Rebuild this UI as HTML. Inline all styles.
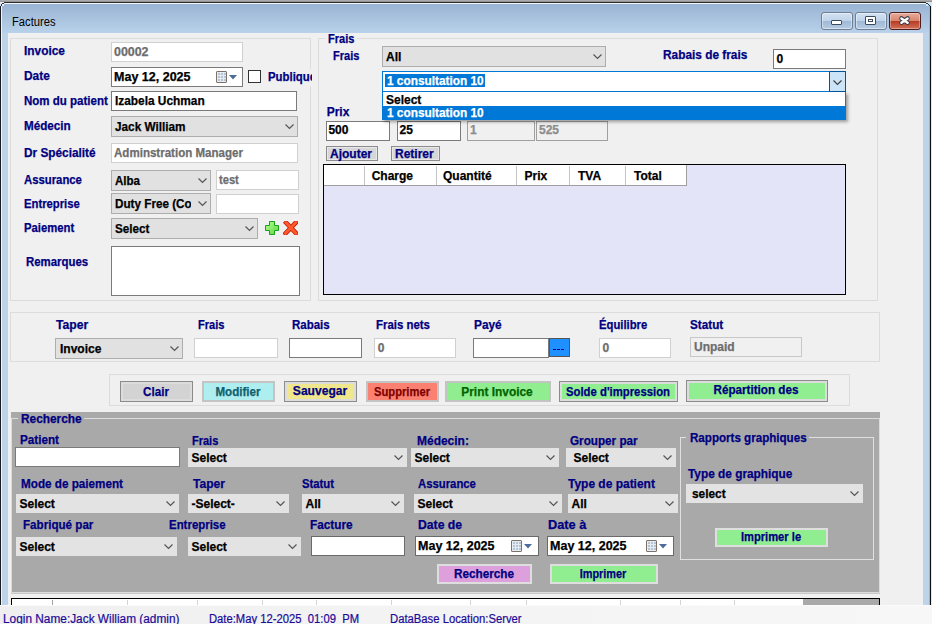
<!DOCTYPE html><html><head><meta charset="utf-8"><style>
html,body{margin:0;padding:0;}
body{width:932px;height:624px;position:relative;overflow:hidden;background:#bcd3ea;font-family:"Liberation Sans",sans-serif;}
.t{position:absolute;white-space:pre;line-height:normal;font-family:"Liberation Sans",sans-serif;}
.t[style*="font-weight:bold"]{-webkit-text-stroke:0.25px currentColor;}
.b{position:absolute;box-sizing:content-box;}
</style></head><body>
<div class="b" style="left:0;top:0;width:932px;height:2px;background:linear-gradient(#b4b4b4,#8a8a8a)"></div>
<div class="b" style="left:0px;top:2px;width:931px;height:622px;background:#bcd3ea;"></div>
<div class="b" style="left:2px;top:4px;width:927px;height:29px;background:linear-gradient(#99b4d3,#b9d1ea)"></div>
<div class="b" style="left:1px;top:2px;width:929px;height:1px;background:#2b2b2b;"></div>
<div class="b" style="left:2px;top:3px;width:927px;height:1px;background:#f4f7fb;"></div>
<div class="b" style="left:0px;top:3px;width:1px;height:602px;background:#1e1e1e;"></div>
<div class="b" style="left:1px;top:3px;width:1px;height:602px;background:#f0f4f8;"></div>
<div class="b" style="left:930px;top:3px;width:1px;height:602px;background:#101010;"></div>
<div class="b" style="left:929px;top:4px;width:1px;height:601px;background:#58cdf5;"></div>
<div class="b" style="left:931px;top:2px;width:1px;height:622px;background:#dde8f3;"></div>
<div class="b" style="left:0px;top:2px;width:4px;height:4px;background:#e4e9f6;"></div>
<div class="b" style="left:4px;top:3px;width:1px;height:1px;background:#f4f7fb;"></div>
<div class="b" style="left:2px;top:3px;width:2px;height:1px;background:#2b2b2b;"></div>
<div class="b" style="left:1px;top:4px;width:1px;height:2px;background:#2b2b2b;"></div>
<div class="b" style="left:0px;top:6px;width:1px;height:1px;background:#1e1e1e;"></div>
<div class="b" style="left:2px;top:4px;width:2px;height:1px;background:#f4f7fb;"></div>
<div class="b" style="left:2px;top:5px;width:1px;height:1px;background:#dfe8f2;"></div>
<div class="b" style="left:926px;top:2px;width:6px;height:4px;background:#dce4f2;"></div>
<div class="b" style="left:926px;top:3px;width:2px;height:1px;background:#1a3a40;"></div>
<div class="b" style="left:928px;top:4px;width:1px;height:1px;background:#1a3a40;"></div>
<div class="b" style="left:929px;top:5px;width:1px;height:1px;background:#1a3a40;"></div>
<div class="b" style="left:926px;top:4px;width:2px;height:1px;background:#c8f0fa;"></div>
<div class="b" style="left:928px;top:5px;width:1px;height:1px;background:#9ae4f8;"></div>
<div class="t" style="left:12.2px;top:15.14px;font-size:12px;color:#000;font-weight:normal;transform:scaleX(0.9339);transform-origin:0 0;">Factures</div>
<div class="b" style="left:821px;top:12px;width:30px;height:16px;border:1px solid #6e7f94;border-radius:3px;background:linear-gradient(#d3e2f2 0%,#bfd3e9 48%,#9fb9d6 52%,#b6cce4 100%);box-shadow:inset 0 0 0 1px rgba(255,255,255,.45)"></div>
<div class="b" style="left:831px;top:20px;width:9px;height:3px;border:1px solid #3c4a5c;border-radius:1px;background:#fff"></div>
<div class="b" style="left:855px;top:12px;width:30px;height:16px;border:1px solid #6e7f94;border-radius:3px;background:linear-gradient(#d3e2f2 0%,#bfd3e9 48%,#9fb9d6 52%,#b6cce4 100%);box-shadow:inset 0 0 0 1px rgba(255,255,255,.45)"></div>
<div class="b" style="left:865px;top:16px;width:9px;height:7px;border:1px solid #3c4a5c;border-radius:1px;background:#fff;box-shadow:inset 0 0 0 2px #fff, inset 0 0 0 3px #3c4a5c"></div>
<div class="b" style="left:889px;top:12px;width:30px;height:16px;border:1px solid #4e1d1d;border-radius:3px;background:linear-gradient(#e8ab9c 0%,#d98670 48%,#b83c22 52%,#d0705a 100%);box-shadow:inset 0 0 0 1px rgba(255,255,255,.35)"></div>
<svg class="b" style="left:897px;top:14px" width="15" height="13" viewBox="0 0 15 13"><path d="M4.4 4.4 L10.6 8.8 M10.6 4.4 L4.4 8.8" stroke="#3a3a4a" stroke-width="4.4" stroke-linecap="round"/><path d="M4.4 4.4 L10.6 8.8 M10.6 4.4 L4.4 8.8" stroke="#fff" stroke-width="2.4" stroke-linecap="round"/></svg>

<div class="b" style="left:8px;top:33px;width:915px;height:572px;background:#f0f0f0;"></div>
<div class="b" style="left:10px;top:38px;width:299px;height:261px;border:1px solid #dcdcdc;"></div>
<div class="t" style="left:24px;top:44.14px;font-size:12px;color:#000080;font-weight:bold;transform:scaleX(0.9889);transform-origin:0 0;">Invoice</div>
<div class="b" style="left:111px;top:42px;width:130px;height:18px;background:#fff;border:1px solid #d0d0d0;"></div>
<div class="t" style="left:114px;top:45.14px;font-size:12px;color:#6d6d6d;font-weight:bold;transform:scaleX(1.0337);transform-origin:0 0;">00002</div>
<div class="t" style="left:24px;top:69.14px;font-size:12px;color:#000080;font-weight:bold;transform:scaleX(0.9917);transform-origin:0 0;">Date</div>
<div class="b" style="left:111px;top:67px;width:130px;height:18px;background:#fff;border:1px solid #7a7a7a;"></div>
<div class="t" style="left:114px;top:70.14px;font-size:12px;color:#000;font-weight:bold;transform:scaleX(1.0424);transform-origin:0 0;">May 12, 2025</div>
<div class="b" style="left:216px;top:71px;width:9px;height:10px;border:1px solid #7d716a;border-radius:1px;background:#e4ecf4"></div>
<div class="b" style="left:218px;top:73px;width:2px;height:2px;background:#b7c3d2;"></div>
<div class="b" style="left:218px;top:76px;width:2px;height:2px;background:#b7c3d2;"></div>
<div class="b" style="left:218px;top:79px;width:2px;height:2px;background:#b7c3d2;"></div>
<div class="b" style="left:221px;top:73px;width:2px;height:2px;background:#b7c3d2;"></div>
<div class="b" style="left:221px;top:76px;width:2px;height:2px;background:#b7c3d2;"></div>
<div class="b" style="left:221px;top:79px;width:2px;height:2px;background:#b7c3d2;"></div>
<div class="b" style="left:224px;top:73px;width:2px;height:2px;background:#b7c3d2;"></div>
<div class="b" style="left:224px;top:76px;width:2px;height:2px;background:#b7c3d2;"></div>
<div class="b" style="left:224px;top:79px;width:2px;height:2px;background:#b7c3d2;"></div>
<svg class="b" style="left:229px;top:75px" width="8" height="5" viewBox="0 0 8 5"><path d="M0 0 L8 0 L4 4.5 Z" fill="#4d6c9a"/></svg>
<div class="b" style="left:248px;top:70px;width:11px;height:11px;background:#fff;border:1px solid #333;"></div>
<div class="b" style="left:266px;top:69px;width:46px;height:17px;overflow:hidden;background:#f0f0f0">
<div class="t" style="left:1.8px;top:1.14px;font-size:12px;color:#000080;font-weight:bold;transform:scaleX(0.9473);transform-origin:0 0;">Publique</div>
</div>
<div class="t" style="left:24px;top:94.14px;font-size:12px;color:#000080;font-weight:bold;transform:scaleX(0.9596);transform-origin:0 0;">Nom du patient</div>
<div class="b" style="left:111px;top:91px;width:184px;height:18px;background:#fff;border:1px solid #7a7a7a;"></div>
<div class="t" style="left:115px;top:94.14px;font-size:12px;color:#000;font-weight:bold;transform:scaleX(0.9889);transform-origin:0 0;">Izabela Uchman</div>
<div class="t" style="left:24px;top:119.14px;font-size:12px;color:#000080;font-weight:bold;transform:scaleX(0.9726);transform-origin:0 0;">Médecin</div>
<div class="b" style="left:111px;top:116px;width:185px;height:19px;background:#e1e1e1;border:1px solid #adadad;"></div>
<div class="t" style="left:115px;top:120.14px;font-size:12px;color:#000;font-weight:bold;transform:scaleX(0.9814);transform-origin:0 0;">Jack William</div>
<svg class="b" style="left:284px;top:123px" width="11" height="8" viewBox="0 0 11 8"><path d="M1.5 1.5 L5.5 5.5 L9.5 1.5" fill="none" stroke="#555" stroke-width="1.2"/></svg>
<div class="t" style="left:24px;top:146.14px;font-size:12px;color:#000080;font-weight:bold;transform:scaleX(0.9848);transform-origin:0 0;">Dr Spécialité</div>
<div class="b" style="left:111px;top:143px;width:185px;height:18px;background:#fff;border:1px solid #d0d0d0;"></div>
<div class="t" style="left:114px;top:146.14px;font-size:12px;color:#6d6d6d;font-weight:bold;transform:scaleX(0.9626);transform-origin:0 0;">Adminstration Manager</div>
<div class="t" style="left:24px;top:173.14px;font-size:12px;color:#000080;font-weight:bold;transform:scaleX(0.9434);transform-origin:0 0;">Assurance</div>
<div class="b" style="left:111px;top:170px;width:98px;height:19px;background:#e1e1e1;border:1px solid #adadad;"></div>
<div class="t" style="left:115px;top:174.14px;font-size:12px;color:#000;font-weight:bold;transform:scaleX(0.9610);transform-origin:0 0;">Alba</div>
<svg class="b" style="left:197px;top:177px" width="11" height="8" viewBox="0 0 11 8"><path d="M1.5 1.5 L5.5 5.5 L9.5 1.5" fill="none" stroke="#555" stroke-width="1.2"/></svg>
<div class="b" style="left:216px;top:170px;width:81px;height:18px;background:#fff;border:1px solid #d0d0d0;"></div>
<div class="t" style="left:218.5px;top:173.14px;font-size:12px;color:#6d6d6d;font-weight:bold;transform:scaleX(0.9277);transform-origin:0 0;">test</div>
<div class="t" style="left:24px;top:197.14px;font-size:12px;color:#000080;font-weight:bold;transform:scaleX(0.9400);transform-origin:0 0;">Entreprise</div>
<div class="b" style="left:111px;top:193px;width:98px;height:19px;background:#e1e1e1;border:1px solid #adadad;"></div>
<svg class="b" style="left:197px;top:200px" width="11" height="8" viewBox="0 0 11 8"><path d="M1.5 1.5 L5.5 5.5 L9.5 1.5" fill="none" stroke="#555" stroke-width="1.2"/></svg>
<div class="b" style="left:112px;top:194px;width:79px;height:19px;overflow:hidden">
<div class="t" style="left:3.4px;top:3.14px;font-size:12px;color:#000;font-weight:bold;transform:scaleX(0.9750);transform-origin:0 0;">Duty Free (Company)</div>
</div>
<div class="b" style="left:216px;top:194px;width:81px;height:18px;background:#fff;border:1px solid #d0d0d0;"></div>
<div class="t" style="left:24px;top:221.14px;font-size:12px;color:#000080;font-weight:bold;transform:scaleX(0.9408);transform-origin:0 0;">Paiement</div>
<div class="b" style="left:111px;top:218px;width:145px;height:19px;background:#e1e1e1;border:1px solid #adadad;"></div>
<div class="t" style="left:115px;top:222.14px;font-size:12px;color:#000;font-weight:bold;transform:scaleX(0.9729);transform-origin:0 0;">Select</div>
<svg class="b" style="left:244px;top:225px" width="11" height="8" viewBox="0 0 11 8"><path d="M1.5 1.5 L5.5 5.5 L9.5 1.5" fill="none" stroke="#555" stroke-width="1.2"/></svg>
<svg class="b" style="left:265px;top:221px" width="14" height="14" viewBox="0 0 14 14"><defs><linearGradient id="gp" x1="0" y1="0" x2="1" y2="1"><stop offset="0" stop-color="#b4ff96"/><stop offset="1" stop-color="#5ad838"/></linearGradient></defs><path d="M4.5 0.5 H9.5 V4.5 H13.5 V9.5 H9.5 V13.5 H4.5 V9.5 H0.5 V4.5 H4.5 Z" fill="url(#gp)" stroke="#1c9e1c" stroke-width="1"/></svg>
<svg class="b" style="left:283px;top:221px" width="15" height="14" viewBox="0 0 15 14"><path d="M3.2 1.8 L13 12.2 M12.8 1.6 L2.6 12.3" stroke="#c81e06" stroke-width="4.6" stroke-linecap="square"/><path d="M3.2 1.8 L13 12.2 M12.8 1.6 L2.6 12.3" stroke="#ff5a2c" stroke-width="2.8" stroke-linecap="square"/></svg>
<div class="t" style="left:25.5px;top:255.14px;font-size:12px;color:#000080;font-weight:bold;transform:scaleX(0.9514);transform-origin:0 0;">Remarques</div>
<div class="b" style="left:111px;top:246px;width:187px;height:48px;background:#fff;border:1px solid #7a7a7a;"></div>
<div class="b" style="left:318px;top:38px;width:558px;height:261px;border:1px solid #dcdcdc;"></div>
<div class="b" style="left:325px;top:33px;width:32px;height:12px;background:#f0f0f0;"></div>
<div class="t" style="left:327.6px;top:32.14px;font-size:12px;color:#000080;font-weight:bold;transform:scaleX(0.9203);transform-origin:0 0;">Frais</div>
<div class="t" style="left:332.7px;top:49.14px;font-size:12px;color:#000080;font-weight:bold;transform:scaleX(0.9203);transform-origin:0 0;">Frais</div>
<div class="b" style="left:382px;top:46px;width:222px;height:19px;background:#e1e1e1;border:1px solid #adadad;"></div>
<div class="t" style="left:386px;top:50.14px;font-size:12px;color:#000;font-weight:bold;">All</div>
<svg class="b" style="left:592px;top:53px" width="11" height="8" viewBox="0 0 11 8"><path d="M1.5 1.5 L5.5 5.5 L9.5 1.5" fill="none" stroke="#555" stroke-width="1.2"/></svg>
<div class="t" style="left:662.7px;top:48.14px;font-size:12px;color:#000080;font-weight:bold;transform:scaleX(0.9874);transform-origin:0 0;">Rabais de frais</div>
<div class="b" style="left:773px;top:49px;width:71px;height:18px;background:#fff;border:1px solid #7a7a7a;"></div>
<div class="t" style="left:776.6px;top:52.14px;font-size:12px;color:#000;font-weight:bold;">0</div>
<div class="t" style="left:326.7px;top:105.14px;font-size:12px;color:#000080;font-weight:bold;">Prix</div>
<div class="b" style="left:326px;top:121px;width:62px;height:18px;background:#fff;border:1px solid #7a7a7a;"></div>
<div class="t" style="left:328.4px;top:123.14px;font-size:12px;color:#000;font-weight:bold;">500</div>
<div class="b" style="left:397px;top:121px;width:62px;height:18px;background:#fff;border:1px solid #7a7a7a;"></div>
<div class="t" style="left:399.5px;top:123.14px;font-size:12px;color:#000;font-weight:bold;">25</div>
<div class="b" style="left:467px;top:121px;width:66px;height:18px;background:#f0f0f0;border:1px solid #a0a0a0;"></div>
<div class="t" style="left:470px;top:123.14px;font-size:12px;color:#8c8c8c;font-weight:bold;">1</div>
<div class="b" style="left:536px;top:121px;width:70px;height:18px;background:#f0f0f0;border:1px solid #a0a0a0;"></div>
<div class="t" style="left:539px;top:123.14px;font-size:12px;color:#8c8c8c;font-weight:bold;">525</div>
<div class="b" style="left:326px;top:146px;width:50px;height:13px;border:1px solid #8c8c8c;background:#d7d7d7;box-shadow:inset 0 0 0 1px #e8e8e8"></div>
<div class="t" style="left:330px;top:147.14px;font-size:12px;color:#000080;font-weight:bold;">Ajouter</div>
<div class="b" style="left:391px;top:146px;width:47px;height:13px;border:1px solid #8c8c8c;background:#d7d7d7;box-shadow:inset 0 0 0 1px #e8e8e8"></div>
<div class="t" style="left:395px;top:147.14px;font-size:12px;color:#000080;font-weight:bold;">Retirer</div>
<div class="b" style="left:323px;top:164px;width:521px;height:129px;border:1px solid #000;background:#e4e4f8"></div>
<div class="b" style="left:324px;top:165px;width:363px;height:21px;background:#fff;"></div>
<div class="b" style="left:324px;top:185px;width:363px;height:1px;background:#a0a0a0;"></div>
<div class="b" style="left:364px;top:166px;width:1px;height:19px;background:#c4c4c4;"></div>
<div class="b" style="left:436px;top:166px;width:1px;height:19px;background:#c4c4c4;"></div>
<div class="b" style="left:516px;top:166px;width:1px;height:19px;background:#c4c4c4;"></div>
<div class="b" style="left:569px;top:166px;width:1px;height:19px;background:#c4c4c4;"></div>
<div class="b" style="left:625px;top:166px;width:1px;height:19px;background:#c4c4c4;"></div>
<div class="b" style="left:686px;top:165px;width:1px;height:21px;background:#a0a0a0;"></div>
<div class="t" style="left:371.7px;top:169.14px;font-size:12px;color:#000;font-weight:bold;">Charge</div>
<div class="t" style="left:443px;top:169.14px;font-size:12px;color:#000;font-weight:bold;">Quantité</div>
<div class="t" style="left:524.5px;top:169.14px;font-size:12px;color:#000;font-weight:bold;">Prix</div>
<div class="t" style="left:578px;top:169.14px;font-size:12px;color:#000;font-weight:bold;">TVA</div>
<div class="t" style="left:634px;top:169.14px;font-size:12px;color:#000;font-weight:bold;">Total</div>
<div class="b" style="left:382px;top:71px;width:462px;height:19px;border:1px solid #0078d7;background:#fff"></div>
<div class="b" style="left:382px;top:91px;width:464px;height:1px;background:#0078d7;"></div>
<div class="b" style="left:829px;top:71px;width:15px;height:19px;border:1px solid #00549a;background:#cce4f7"></div>
<svg class="b" style="left:832px;top:79px" width="11" height="8" viewBox="0 0 11 8"><path d="M1.5 1.5 L5.5 5.5 L9.5 1.5" fill="none" stroke="#404040" stroke-width="1.2"/></svg>
<div class="b" style="left:385px;top:74px;width:100px;height:13px;background:#0078d7;"></div>
<div class="t" style="left:386.6px;top:74.14px;font-size:12px;color:#fff;font-weight:bold;transform:scaleX(0.9854);transform-origin:0 0;">1 consultation 10</div>
<div class="b" style="left:382px;top:92px;width:462px;height:27px;border:1px solid #0078d7;border-top:none;background:#fff;box-shadow:2px 2px 3px rgba(0,0,0,.35)"></div>
<div class="b" style="left:383px;top:106px;width:462px;height:14px;background:#0078d7;"></div>
<div class="t" style="left:386px;top:92.64px;font-size:12px;color:#000;font-weight:bold;">Select</div>
<div class="t" style="left:386.6px;top:106.14px;font-size:12px;color:#fff;font-weight:bold;transform:scaleX(0.9854);transform-origin:0 0;">1 consultation 10</div>
<div class="b" style="left:10px;top:312px;width:868px;height:48px;border:1px solid #dcdcdc;"></div>
<div class="t" style="left:56.1px;top:318.14px;font-size:12px;color:#000080;font-weight:bold;transform:scaleX(1.0127);transform-origin:0 0;">Taper</div>
<div class="b" style="left:55px;top:338px;width:126px;height:19px;background:#e1e1e1;border:1px solid #adadad;"></div>
<div class="t" style="left:60px;top:342.14px;font-size:12px;color:#000;font-weight:bold;">Invoice</div>
<svg class="b" style="left:169px;top:345px" width="11" height="8" viewBox="0 0 11 8"><path d="M1.5 1.5 L5.5 5.5 L9.5 1.5" fill="none" stroke="#555" stroke-width="1.2"/></svg>
<div class="t" style="left:197.7px;top:318.14px;font-size:12px;color:#000080;font-weight:bold;transform:scaleX(0.9203);transform-origin:0 0;">Frais</div>
<div class="b" style="left:194px;top:338px;width:82px;height:18px;background:#fff;border:1px solid #d0d0d0;"></div>
<div class="t" style="left:292px;top:318.14px;font-size:12px;color:#000080;font-weight:bold;transform:scaleX(0.9578);transform-origin:0 0;">Rabais</div>
<div class="b" style="left:289px;top:338px;width:71px;height:18px;background:#fff;border:1px solid #7a7a7a;"></div>
<div class="t" style="left:375.7px;top:318.14px;font-size:12px;color:#000080;font-weight:bold;transform:scaleX(0.9506);transform-origin:0 0;">Frais nets</div>
<div class="b" style="left:374px;top:338px;width:80px;height:18px;background:#fff;border:1px solid #d0d0d0;"></div>
<div class="t" style="left:377.8px;top:341.14px;font-size:12px;color:#6d6d6d;font-weight:bold;">0</div>
<div class="t" style="left:473.5px;top:318.14px;font-size:12px;color:#000080;font-weight:bold;transform:scaleX(0.9882);transform-origin:0 0;">Payé</div>
<div class="b" style="left:473px;top:338px;width:74px;height:18px;background:#fff;border:1px solid #7a7a7a;"></div>
<div class="b" style="left:549px;top:338px;width:21px;height:19px;background:#1e90ff;box-shadow:inset 0 0 0 1px #555;"></div>
<div class="b" style="left:553px;top:349px;width:3px;height:1px;background:#000080;"></div>
<div class="b" style="left:557px;top:349px;width:3px;height:1px;background:#000080;"></div>
<div class="b" style="left:561px;top:349px;width:3px;height:1px;background:#000080;"></div>
<div class="t" style="left:599.4px;top:318.14px;font-size:12px;color:#000080;font-weight:bold;transform:scaleX(0.9388);transform-origin:0 0;">Équilibre</div>
<div class="b" style="left:599px;top:338px;width:70px;height:18px;background:#fff;border:1px solid #d0d0d0;"></div>
<div class="t" style="left:602.5px;top:341.14px;font-size:12px;color:#6d6d6d;font-weight:bold;">0</div>
<div class="t" style="left:690.1px;top:318.14px;font-size:12px;color:#000080;font-weight:bold;transform:scaleX(0.9765);transform-origin:0 0;">Statut</div>
<div class="b" style="left:690px;top:337px;width:110px;height:18px;background:#f0f0f0;border:1px solid #c8c8c8;"></div>
<div class="t" style="left:694px;top:340.14px;font-size:12px;color:#6d6d6d;font-weight:bold;">Unpaid</div>
<div class="b" style="left:109px;top:374px;width:739px;height:30px;border:1px solid #dcdcdc;"></div>
<div class="b" style="left:120px;top:381px;width:71px;height:19px;border:1px solid #8c8c8c;background:#d3d3d3;box-shadow:inset 0 0 0 2px #dcdcdc"></div>
<div class="t" style="left:155.7px;top:385.14px;color:#000080;font-size:12px;font-weight:bold;transform:translateX(-50%) scaleX(0.9667);transform-origin:50% 0">Clair</div>
<div class="b" style="left:202px;top:381px;width:69px;height:17px;border:2px solid #c4c4c4;background:#afeeee;"></div>
<div class="t" style="left:237.7px;top:385.14px;color:#106070;font-size:12px;font-weight:bold;transform:translateX(-50%) scaleX(0.9663);transform-origin:50% 0">Modifier</div>
<div class="b" style="left:284px;top:381px;width:71px;height:19px;border:1px solid #8c8c8c;background:#f0e68c;box-shadow:inset 0 0 0 2px #dcdcdc"></div>
<div class="t" style="left:319.7px;top:384.14px;color:#000080;font-size:12px;font-weight:bold;transform:translateX(-50%) scaleX(1.0050);transform-origin:50% 0">Sauvegar</div>
<div class="b" style="left:366px;top:381px;width:69px;height:17px;border:2px solid #c4c4c4;background:#fa8072;"></div>
<div class="t" style="left:401.7px;top:385.14px;color:#800000;font-size:12px;font-weight:bold;transform:translateX(-50%) scaleX(0.9331);transform-origin:50% 0">Supprimer</div>
<div class="b" style="left:445px;top:381px;width:102px;height:17px;border:2px solid #c4c4c4;background:#90ee90;"></div>
<div class="t" style="left:497.2px;top:385.14px;color:#006400;font-size:12px;font-weight:bold;transform:translateX(-50%) scaleX(0.9912);transform-origin:50% 0">Print Invoice</div>
<div class="b" style="left:559px;top:381px;width:117px;height:19px;border:1px solid #8c8c8c;background:#90ee90;box-shadow:inset 0 0 0 2px #dcdcdc"></div>
<div class="t" style="left:617.7px;top:385.14px;color:#000080;font-size:12px;font-weight:bold;transform:translateX(-50%) scaleX(0.9436);transform-origin:50% 0">Solde d'impression</div>
<div class="b" style="left:686px;top:380px;width:140px;height:20px;border:1px solid #8c8c8c;background:#90ee90;box-shadow:inset 0 0 0 2px #dcdcdc"></div>
<div class="t" style="left:756.2px;top:383.14px;color:#000080;font-size:12px;font-weight:bold;transform:translateX(-50%) scaleX(0.9730);transform-origin:50% 0">Répartition des</div>
<div class="b" style="left:11px;top:412px;width:869px;height:180px;background:#a9a9a9;"></div>
<div class="b" style="left:11px;top:592px;width:869px;height:1px;background:#dcdcdc;"></div>
<div class="b" style="left:11px;top:593px;width:869px;height:1px;background:#c8c8c8;"></div>
<div class="b" style="left:11px;top:418px;width:869px;height:1px;background:#dcdcdc;"></div>
<div class="b" style="left:11px;top:418px;width:1px;height:175px;background:#dcdcdc;"></div>
<div class="b" style="left:879px;top:418px;width:1px;height:175px;background:#dcdcdc;"></div>
<div class="b" style="left:18px;top:413px;width:66px;height:10px;background:#a9a9a9;"></div>
<div class="t" style="left:20.8px;top:412.14px;font-size:12px;color:#000080;font-weight:bold;transform:scaleX(0.9890);transform-origin:0 0;">Recherche</div>
<div class="t" style="left:20.2px;top:433.14px;font-size:12px;color:#000080;font-weight:bold;transform:scaleX(0.9746);transform-origin:0 0;">Patient</div>
<div class="b" style="left:15px;top:447px;width:163px;height:18px;background:#fff;border:1px solid #7a7a7a;"></div>
<div class="t" style="left:192.4px;top:434.14px;font-size:12px;color:#000080;font-weight:bold;transform:scaleX(0.9168);transform-origin:0 0;">Frais</div>
<div class="b" style="left:188px;top:448px;width:217px;height:17px;background:#e3e3e3;border:1px solid #e3e3e3;"></div>
<div class="t" style="left:191.5px;top:451.14px;font-size:12px;color:#000;font-weight:bold;">Select</div>
<svg class="b" style="left:393px;top:454px" width="11" height="8" viewBox="0 0 11 8"><path d="M1.5 1.5 L5.5 5.5 L9.5 1.5" fill="none" stroke="#555" stroke-width="1.2"/></svg>
<div class="t" style="left:416.7px;top:434.14px;font-size:12px;color:#000080;font-weight:bold;transform:scaleX(0.9978);transform-origin:0 0;">Médecin:</div>
<div class="b" style="left:411px;top:448px;width:146px;height:17px;background:#e3e3e3;border:1px solid #e3e3e3;"></div>
<div class="t" style="left:414.5px;top:451.14px;font-size:12px;color:#000;font-weight:bold;">Select</div>
<svg class="b" style="left:545px;top:454px" width="11" height="8" viewBox="0 0 11 8"><path d="M1.5 1.5 L5.5 5.5 L9.5 1.5" fill="none" stroke="#555" stroke-width="1.2"/></svg>
<div class="t" style="left:569.9px;top:434.14px;font-size:12px;color:#000080;font-weight:bold;transform:scaleX(0.9746);transform-origin:0 0;">Grouper par</div>
<div class="b" style="left:566px;top:448px;width:108px;height:17px;background:#e3e3e3;border:1px solid #e3e3e3;"></div>
<div class="t" style="left:573.5px;top:451.14px;font-size:12px;color:#000;font-weight:bold;">Select</div>
<svg class="b" style="left:662px;top:454px" width="11" height="8" viewBox="0 0 11 8"><path d="M1.5 1.5 L5.5 5.5 L9.5 1.5" fill="none" stroke="#555" stroke-width="1.2"/></svg>
<div class="t" style="left:21px;top:477.14px;font-size:12px;color:#000080;font-weight:bold;transform:scaleX(0.9743);transform-origin:0 0;">Mode de paiement</div>
<div class="b" style="left:16px;top:494px;width:161px;height:17px;background:#e3e3e3;border:1px solid #e3e3e3;"></div>
<div class="t" style="left:19.5px;top:497.14px;font-size:12px;color:#000;font-weight:bold;">Select</div>
<svg class="b" style="left:165px;top:500px" width="11" height="8" viewBox="0 0 11 8"><path d="M1.5 1.5 L5.5 5.5 L9.5 1.5" fill="none" stroke="#555" stroke-width="1.2"/></svg>
<div class="t" style="left:193.1px;top:477.14px;font-size:12px;color:#000080;font-weight:bold;transform:scaleX(1.0064);transform-origin:0 0;">Taper</div>
<div class="b" style="left:188px;top:494px;width:99px;height:17px;background:#e3e3e3;border:1px solid #e3e3e3;"></div>
<div class="t" style="left:191.5px;top:497.14px;font-size:12px;color:#000;font-weight:bold;">-Select-</div>
<svg class="b" style="left:275px;top:500px" width="11" height="8" viewBox="0 0 11 8"><path d="M1.5 1.5 L5.5 5.5 L9.5 1.5" fill="none" stroke="#555" stroke-width="1.2"/></svg>
<div class="t" style="left:301.9px;top:477.14px;font-size:12px;color:#000080;font-weight:bold;transform:scaleX(0.9412);transform-origin:0 0;">Statut</div>
<div class="b" style="left:302px;top:494px;width:100px;height:17px;background:#e3e3e3;border:1px solid #e3e3e3;"></div>
<div class="t" style="left:305.5px;top:497.14px;font-size:12px;color:#000;font-weight:bold;">All</div>
<svg class="b" style="left:390px;top:500px" width="11" height="8" viewBox="0 0 11 8"><path d="M1.5 1.5 L5.5 5.5 L9.5 1.5" fill="none" stroke="#555" stroke-width="1.2"/></svg>
<div class="t" style="left:417.7px;top:477.14px;font-size:12px;color:#000080;font-weight:bold;transform:scaleX(0.9434);transform-origin:0 0;">Assurance</div>
<div class="b" style="left:414px;top:494px;width:146px;height:17px;background:#e3e3e3;border:1px solid #e3e3e3;"></div>
<div class="t" style="left:417.5px;top:497.14px;font-size:12px;color:#000;font-weight:bold;">Select</div>
<svg class="b" style="left:548px;top:500px" width="11" height="8" viewBox="0 0 11 8"><path d="M1.5 1.5 L5.5 5.5 L9.5 1.5" fill="none" stroke="#555" stroke-width="1.2"/></svg>
<div class="t" style="left:568.3px;top:477.14px;font-size:12px;color:#000080;font-weight:bold;transform:scaleX(0.9974);transform-origin:0 0;">Type de patient</div>
<div class="b" style="left:568px;top:494px;width:108px;height:17px;background:#e3e3e3;border:1px solid #e3e3e3;"></div>
<div class="t" style="left:571.5px;top:497.14px;font-size:12px;color:#000;font-weight:bold;">All</div>
<svg class="b" style="left:664px;top:500px" width="11" height="8" viewBox="0 0 11 8"><path d="M1.5 1.5 L5.5 5.5 L9.5 1.5" fill="none" stroke="#555" stroke-width="1.2"/></svg>
<div class="t" style="left:22.8px;top:518.14px;font-size:12px;color:#000080;font-weight:bold;transform:scaleX(0.9685);transform-origin:0 0;">Fabriqué par</div>
<div class="b" style="left:16px;top:537px;width:159px;height:17px;background:#e3e3e3;border:1px solid #e3e3e3;"></div>
<div class="t" style="left:19.5px;top:540.14px;font-size:12px;color:#000;font-weight:bold;">Select</div>
<svg class="b" style="left:163px;top:543px" width="11" height="8" viewBox="0 0 11 8"><path d="M1.5 1.5 L5.5 5.5 L9.5 1.5" fill="none" stroke="#555" stroke-width="1.2"/></svg>
<div class="t" style="left:169.4px;top:518.14px;font-size:12px;color:#000080;font-weight:bold;transform:scaleX(0.9535);transform-origin:0 0;">Entreprise</div>
<div class="b" style="left:188px;top:537px;width:111px;height:17px;background:#e3e3e3;border:1px solid #e3e3e3;"></div>
<div class="t" style="left:191.5px;top:540.14px;font-size:12px;color:#000;font-weight:bold;">Select</div>
<svg class="b" style="left:287px;top:543px" width="11" height="8" viewBox="0 0 11 8"><path d="M1.5 1.5 L5.5 5.5 L9.5 1.5" fill="none" stroke="#555" stroke-width="1.2"/></svg>
<div class="t" style="left:310.2px;top:518.14px;font-size:12px;color:#000080;font-weight:bold;transform:scaleX(0.9848);transform-origin:0 0;">Facture</div>
<div class="b" style="left:311px;top:536px;width:92px;height:18px;background:#fff;border:1px solid #6a6a6a;"></div>
<div class="t" style="left:417.5px;top:518.14px;font-size:12px;color:#000080;font-weight:bold;transform:scaleX(1.0171);transform-origin:0 0;">Date de</div>
<div class="b" style="left:415px;top:536px;width:122px;height:18px;background:#fff;border:1px solid #6a6a6a;"></div>
<div class="t" style="left:417.8px;top:539.14px;font-size:12px;color:#000;font-weight:bold;transform:scaleX(1.0424);transform-origin:0 0;">May 12, 2025</div>
<div class="b" style="left:511px;top:540px;width:9px;height:10px;border:1px solid #7d716a;border-radius:1px;background:#e4ecf4"></div>
<div class="b" style="left:513px;top:542px;width:2px;height:2px;background:#b7c3d2;"></div>
<div class="b" style="left:513px;top:545px;width:2px;height:2px;background:#b7c3d2;"></div>
<div class="b" style="left:513px;top:548px;width:2px;height:2px;background:#b7c3d2;"></div>
<div class="b" style="left:516px;top:542px;width:2px;height:2px;background:#b7c3d2;"></div>
<div class="b" style="left:516px;top:545px;width:2px;height:2px;background:#b7c3d2;"></div>
<div class="b" style="left:516px;top:548px;width:2px;height:2px;background:#b7c3d2;"></div>
<div class="b" style="left:519px;top:542px;width:2px;height:2px;background:#b7c3d2;"></div>
<div class="b" style="left:519px;top:545px;width:2px;height:2px;background:#b7c3d2;"></div>
<div class="b" style="left:519px;top:548px;width:2px;height:2px;background:#b7c3d2;"></div>
<svg class="b" style="left:524px;top:544px" width="8" height="5" viewBox="0 0 8 5"><path d="M0 0 L8 0 L4 4.5 Z" fill="#4d6c9a"/></svg>
<div class="t" style="left:548.1px;top:518.14px;font-size:12px;color:#000080;font-weight:bold;transform:scaleX(1.0630);transform-origin:0 0;">Date à</div>
<div class="b" style="left:547px;top:536px;width:125px;height:18px;background:#fff;border:1px solid #6a6a6a;"></div>
<div class="t" style="left:549.7px;top:539.14px;font-size:12px;color:#000;font-weight:bold;transform:scaleX(1.0424);transform-origin:0 0;">May 12, 2025</div>
<div class="b" style="left:646px;top:540px;width:9px;height:10px;border:1px solid #7d716a;border-radius:1px;background:#e4ecf4"></div>
<div class="b" style="left:648px;top:542px;width:2px;height:2px;background:#b7c3d2;"></div>
<div class="b" style="left:648px;top:545px;width:2px;height:2px;background:#b7c3d2;"></div>
<div class="b" style="left:648px;top:548px;width:2px;height:2px;background:#b7c3d2;"></div>
<div class="b" style="left:651px;top:542px;width:2px;height:2px;background:#b7c3d2;"></div>
<div class="b" style="left:651px;top:545px;width:2px;height:2px;background:#b7c3d2;"></div>
<div class="b" style="left:651px;top:548px;width:2px;height:2px;background:#b7c3d2;"></div>
<div class="b" style="left:654px;top:542px;width:2px;height:2px;background:#b7c3d2;"></div>
<div class="b" style="left:654px;top:545px;width:2px;height:2px;background:#b7c3d2;"></div>
<div class="b" style="left:654px;top:548px;width:2px;height:2px;background:#b7c3d2;"></div>
<svg class="b" style="left:659px;top:544px" width="8" height="5" viewBox="0 0 8 5"><path d="M0 0 L8 0 L4 4.5 Z" fill="#4d6c9a"/></svg>
<div class="b" style="left:437px;top:564px;width:91px;height:16px;border:2px solid #dedede;background:#dda0dd;"></div>
<div class="t" style="left:483.7px;top:567.14px;color:#000080;font-size:12px;font-weight:bold;transform:translateX(-50%) scaleX(0.9776);transform-origin:50% 0">Recherche</div>
<div class="b" style="left:550px;top:564px;width:104px;height:16px;border:2px solid #dedede;background:#90ee90;"></div>
<div class="t" style="left:603.2px;top:567.14px;color:#000080;font-size:12px;font-weight:bold;transform:translateX(-50%) scaleX(0.9093);transform-origin:50% 0">Imprimer</div>
<div class="b" style="left:680px;top:437px;width:192px;height:121px;border:1px solid #e0e0e0;"></div>
<div class="b" style="left:686px;top:430px;width:123px;height:14px;background:#a9a9a9;"></div>
<div class="t" style="left:689.6px;top:431.14px;font-size:12px;color:#000080;font-weight:bold;transform:scaleX(0.9661);transform-origin:0 0;">Rapports graphiques</div>
<div class="t" style="left:688.4px;top:467.14px;font-size:12px;color:#000080;font-weight:bold;transform:scaleX(0.9868);transform-origin:0 0;">Type de graphique</div>
<div class="b" style="left:686px;top:484px;width:175px;height:17px;background:#e3e3e3;border:1px solid #e3e3e3;"></div>
<div class="t" style="left:692.4px;top:487.14px;font-size:12px;color:#000;font-weight:bold;transform:scaleX(0.9873);transform-origin:0 0;">select</div>
<svg class="b" style="left:849px;top:490px" width="11" height="8" viewBox="0 0 11 8"><path d="M1.5 1.5 L5.5 5.5 L9.5 1.5" fill="none" stroke="#555" stroke-width="1.2"/></svg>
<div class="b" style="left:715px;top:528px;width:109px;height:15px;border:2px solid #dedede;background:#90ee90;"></div>
<div class="t" style="left:770.7px;top:530.14px;color:#000080;font-size:12px;font-weight:bold;transform:translateX(-50%) scaleX(0.9304);transform-origin:50% 0">Imprimer le</div>
<div class="b" style="left:11px;top:598px;width:867px;height:20px;border:1px solid #000;background:#a9a9a9"></div>
<div class="b" style="left:12px;top:599px;width:791px;height:14px;background:#fff;"></div>
<div class="b" style="left:52px;top:600px;width:1px;height:13px;background:#a0a0a0;"></div>
<div class="b" style="left:127px;top:600px;width:1px;height:13px;background:#d4d4d4;"></div>
<div class="b" style="left:197px;top:600px;width:1px;height:13px;background:#d4d4d4;"></div>
<div class="b" style="left:262px;top:600px;width:1px;height:13px;background:#d4d4d4;"></div>
<div class="b" style="left:316px;top:600px;width:1px;height:13px;background:#d4d4d4;"></div>
<div class="b" style="left:391px;top:600px;width:1px;height:13px;background:#d4d4d4;"></div>
<div class="b" style="left:470px;top:600px;width:1px;height:13px;background:#d4d4d4;"></div>
<div class="b" style="left:526px;top:600px;width:1px;height:13px;background:#d4d4d4;"></div>
<div class="b" style="left:620px;top:600px;width:1px;height:13px;background:#d4d4d4;"></div>
<div class="b" style="left:680px;top:600px;width:1px;height:13px;background:#d4d4d4;"></div>
<div class="b" style="left:734px;top:600px;width:1px;height:13px;background:#d4d4d4;"></div>
<div class="b" style="left:0px;top:605px;width:932px;height:1px;background:#fbfbfb;"></div>
<div class="b" style="left:0px;top:606px;width:932px;height:18px;background:#f0f0f0;background:linear-gradient(90deg,#efefef,#f3f3f3 40%,#f7f7f7)"></div>
<div class="t" style="left:2.7px;top:611.64px;font-size:12px;color:#1c0a98;font-weight:normal;transform:scaleX(0.9876);transform-origin:0 0;-webkit-text-stroke:0.2px currentColor;">Login Name:Jack William (admin)</div>
<div class="t" style="left:208.5px;top:611.64px;font-size:12px;color:#1c0a98;font-weight:normal;transform:scaleX(0.9370);transform-origin:0 0;-webkit-text-stroke:0.2px currentColor;">Date:May 12-2025  01:09  PM</div>
<div class="t" style="left:389.7px;top:611.64px;font-size:12px;color:#1c0a98;font-weight:normal;transform:scaleX(0.9394);transform-origin:0 0;-webkit-text-stroke:0.2px currentColor;">DataBase Location:Server</div>
</body></html>
